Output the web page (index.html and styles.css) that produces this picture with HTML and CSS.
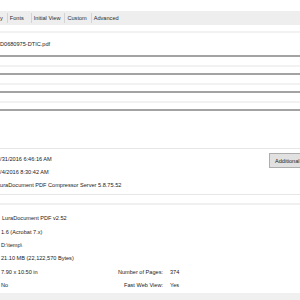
FILE: index.html
```html
<!DOCTYPE html>
<html lang="en">

<head>
  <meta charset="UTF-8">
  <title>Document Properties</title>
  <link rel="stylesheet" href="styles.css">
</head>

<body>

  <div class="tabs">
    <span class="tab tab-first">y</span>
    <span class="tab tab-wide">Fonts</span>
    <span class="tab">Initial View</span>
    <span class="tab">Custom</span>
    <span class="tab">Advanced</span>
  </div>

  <div class="fields">
    <div class="field field-first"><span>D0680975-DTIC.pdf</span></div>
    <div class="field"></div>
    <div class="field"></div>
    <div class="field"></div>
  </div>

  <div class="dates">
    <div class="dates-list">
      <div class="row">7/31/2016 6:46:16 AM</div>
      <div class="row">7/4/2016 8:30:42 AM</div>
      <div class="row">LuraDocument PDF Compressor Server 5.8.75.52</div>
    </div>
    <button class="btn">Additional Metadata...</button>
  </div>

  <div class="band"></div>

  <div class="advanced">
    <div class="row first">LuraDocument PDF v2.52</div>
    <div></div>
    <div></div>

    <div class="row">1.6 (Acrobat 7.x)</div>
    <div></div>
    <div></div>

    <div class="row">D:\temp\</div>
    <div></div>
    <div></div>

    <div class="row">21.10 MB (22,122,570 Bytes)</div>
    <div></div>
    <div></div>

    <div class="row">7.90 x 10.50 in</div>
    <div class="row label">Number of Pages:</div>
    <div class="row value">374</div>

    <div class="row">No</div>
    <div class="row label">Fast Web View:</div>
    <div class="row value">Yes</div>
  </div>

  <div class="band band-bottom"></div>

</body>

</html>
```

FILE: styles.css
```css
body {
  margin: 0;
  height: 300px;
  overflow: hidden;
  font-family: "Liberation Sans", Arial, sans-serif;
  font-size: 5.6px;
  color: #1b1b1b;
  background-color: #fff;
}

.tabs {
  display: flex;
  align-items: center;
  margin-top: 11px;
  height: 14px;
  background-color: #eeeeee;
  white-space: nowrap;
}

.tab {
  padding: 0 4px 0 2px;
  line-height: 10px;
  border-left: 1px solid #d4d4d4;
  color: #2a2a2a;
}

.tab-first {
  border-left: none;
  padding-left: 0;
}

.tab-wide {
  padding-right: 7px;
}

.fields {
  margin-top: 6px;
}

.field {
  height: 6px;
  margin-top: 8px;
  border-top: 2px solid #f2f2f2;
  border-bottom: 2px solid #a3a3a3;
}

.field-first {
  height: 22px;
  margin-top: 0;
  display: flex;
  align-items: center;
}

.dates {
  display: grid;
  grid-template-columns: 269px max-content;
  align-items: start;
  margin-top: 37px;
  padding: 3.5px 0 1.3px;
  border-top: 1px solid #e6e6e6;
  border-bottom: 1px solid #e6e6e6;
}

.dates-list {
  margin-left: -3px;
}

.row {
  height: 13.4px;
  line-height: 13.4px;
  white-space: nowrap;
}

.btn {
  height: 15px;
  margin-top: 0.5px;
  padding: 0 5px;
  font-family: inherit;
  font-size: 5.6px;
  color: #1b1b1b;
  background-color: #e1e1e1;
  border: 1px solid #adadad;
  border-radius: 0;
  white-space: nowrap;
}

.band {
  height: 2px;
  margin-top: 8px;
  background-color: #f0f0f0;
}

.advanced {
  display: grid;
  grid-template-columns: 101px 61px auto;
  padding: 7.3px 0 0 1px;
}

.advanced .first {
  padding-left: 1px;
}

.label {
  text-align: right;
}

.value {
  padding-left: 7px;
}

.band-bottom {
  height: 10px;
  margin-top: 0;
}
```
